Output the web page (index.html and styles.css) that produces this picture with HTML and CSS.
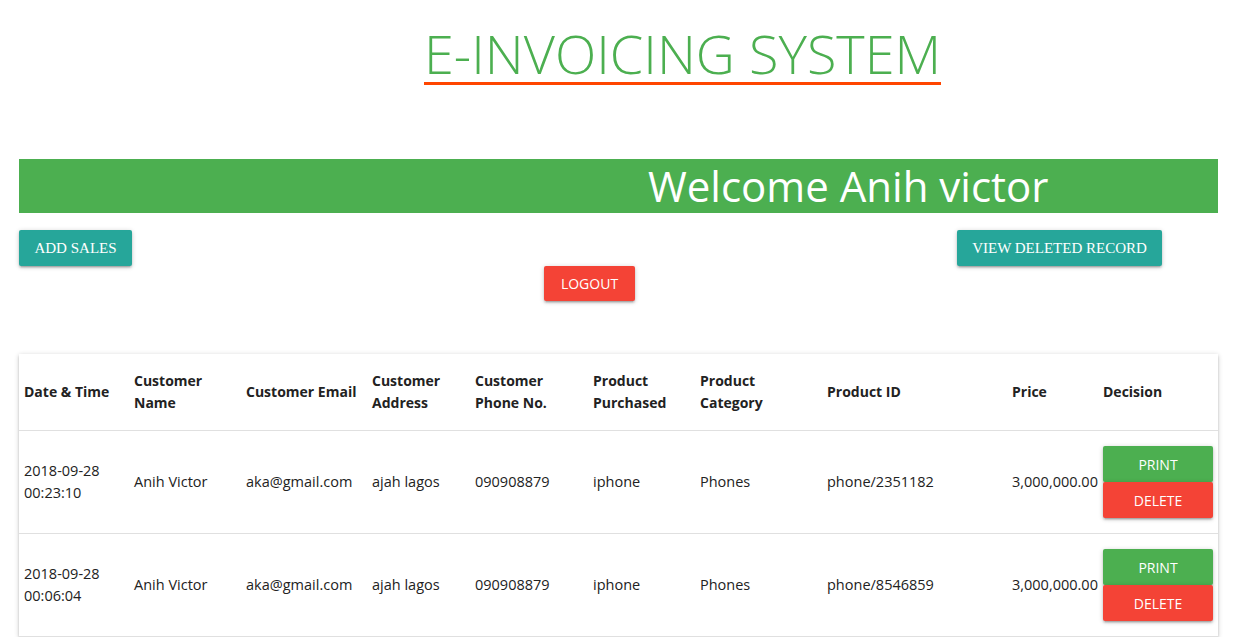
FILE: index.html
```html
<!DOCTYPE html>
<html>
<head>
<meta charset="utf-8">
<link rel="stylesheet" href="styles.css">
</head>
<body>
<div class="page">
  <header class="title-wrap">
    <h1 class="title">E-INVOICING SYSTEM</h1>
  </header>
  <div class="banner"><span class="welcome">Welcome Anih victor</span></div>
  <div class="actions">
    <button class="btn btn-teal btn-serif btn-add">ADD SALES</button>
    <button class="btn btn-teal btn-serif btn-view">VIEW DELETED RECORD</button>
  </div>
  <div class="logout-row">
    <button class="btn btn-red btn-sans btn-logout">LOGOUT</button>
  </div>
  <div class="card">
    <table class="tbl">
      <colgroup>
        <col class="c1"><col class="c2"><col class="c3"><col class="c4"><col class="c5">
        <col class="c6"><col class="c7"><col class="c8"><col class="c9"><col class="c10">
      </colgroup>
      <thead>
        <tr>
          <th>Date &amp; Time</th>
          <th>Customer Name</th>
          <th>Customer Email</th>
          <th>Customer Address</th>
          <th>Customer Phone No.</th>
          <th>Product Purchased</th>
          <th>Product Category</th>
          <th>Product ID</th>
          <th>Price</th>
          <th>Decision</th>
        </tr>
      </thead>
      <tbody>
        <tr>
          <td>2018-09-28 00:23:10</td>
          <td>Anih Victor</td>
          <td>aka@gmail.com</td>
          <td>ajah lagos</td>
          <td>090908879</td>
          <td>iphone</td>
          <td>Phones</td>
          <td>phone/2351182</td>
          <td>3,000,000.00</td>
          <td><div class="decision"><button class="btn btn-green btn-sans btn-block">PRINT</button><button class="btn btn-red btn-sans btn-block">DELETE</button></div></td>
        </tr>
        <tr>
          <td>2018-09-28 00:06:04</td>
          <td>Anih Victor</td>
          <td>aka@gmail.com</td>
          <td>ajah lagos</td>
          <td>090908879</td>
          <td>iphone</td>
          <td>Phones</td>
          <td>phone/8546859</td>
          <td>3,000,000.00</td>
          <td><div class="decision"><button class="btn btn-green btn-sans btn-block">PRINT</button><button class="btn btn-red btn-sans btn-block">DELETE</button></div></td>
        </tr>
      </tbody>
    </table>
  </div>
</div>
</body>
</html>
```

FILE: styles.css
```css
html, body {
  margin: 0;
  padding: 0;
  background: #ffffff;
}
body {
  font-family: "Open Sans", "Noto Sans", sans-serif;
  color: #222;
}
.page {
  padding: 0 21px 0 19px;
}
.title-wrap {
  display: flex;
  padding-left: 405px;
  padding-top: 23px;
  height: 159px;
  box-sizing: border-box;
}
.title {
  margin: 0;
  font-family: "Open Sans", sans-serif;
  font-weight: 300;
  font-size: 54px;
  line-height: 60px;
  color: #4caf50;
  border-bottom: 3px solid #ff4500;
  height: 59px;
}
.banner {
  background: #4caf50;
  height: 54px;
  display: flex;
  align-items: center;
  padding-left: 629px;
}
.welcome {
  color: #fff;
  font-size: 42px;
  line-height: 54px;
  font-weight: 400;
  font-family: "Open Sans", sans-serif;
}
.actions {
  display: flex;
  justify-content: space-between;
  margin-top: 17px;
  padding-right: 56px;
}
.logout-row {
  display: flex;
  padding-left: 525px;
}
.btn {
  border: none;
  color: #fff;
  height: 36px;
  border-radius: 2px;
  box-shadow: 0 2px 2px 0 rgba(0,0,0,0.14), 0 3px 1px -2px rgba(0,0,0,0.12), 0 1px 5px 0 rgba(0,0,0,0.2);
  cursor: pointer;
  padding: 0;
  white-space: nowrap;
  text-align: center;
}
.btn-serif {
  font-family: "Liberation Serif", serif;
  font-size: 15px;
}
.btn-sans {
  font-family: "Open Sans", sans-serif;
  font-size: 14px;
}
.btn-teal { background: #26a69a; }
.btn-red { background: #f44336; }
.btn-green { background: #4caf50; }
.btn-add { width: 113px; }
.btn-view { width: 205px; }
.btn-logout {
  width: 91px;
  height: 35px;
}

.card {
  margin-top: 53px;
  background: #fff;
  box-shadow: 0 2px 2px 0 rgba(0,0,0,0.14), 0 3px 1px -2px rgba(0,0,0,0.12), 0 1px 5px 0 rgba(0,0,0,0.2);
}
.tbl {
  width: 1199px;
  table-layout: fixed;
  border-collapse: collapse;
  font-size: 14.5px;
}
.c1 { width: 110px; }
.c2 { width: 112px; }
.c3 { width: 126px; }
.c4 { width: 103px; }
.c5 { width: 118px; }
.c6 { width: 107px; }
.c7 { width: 127px; }
.c8 { width: 185px; }
.c9 { width: 91px; }
.c10 { width: 120px; }
.tbl th, .tbl td {
  text-align: left;
  padding: 0 5px;
  line-height: 22px;
  vertical-align: middle;
}
.tbl th {
  font-weight: 700;
  font-size: 14px;
  height: 76px;
  border-bottom: 1px solid #e0e0e0;
}
.tbl td {
  height: 102px;
  border-bottom: 1px solid #e0e0e0;
}
.decision {
  display: flex;
  flex-direction: column;
  width: 110px;
}
.btn-block {
  width: 110px;
  height: 36px;
}
```
